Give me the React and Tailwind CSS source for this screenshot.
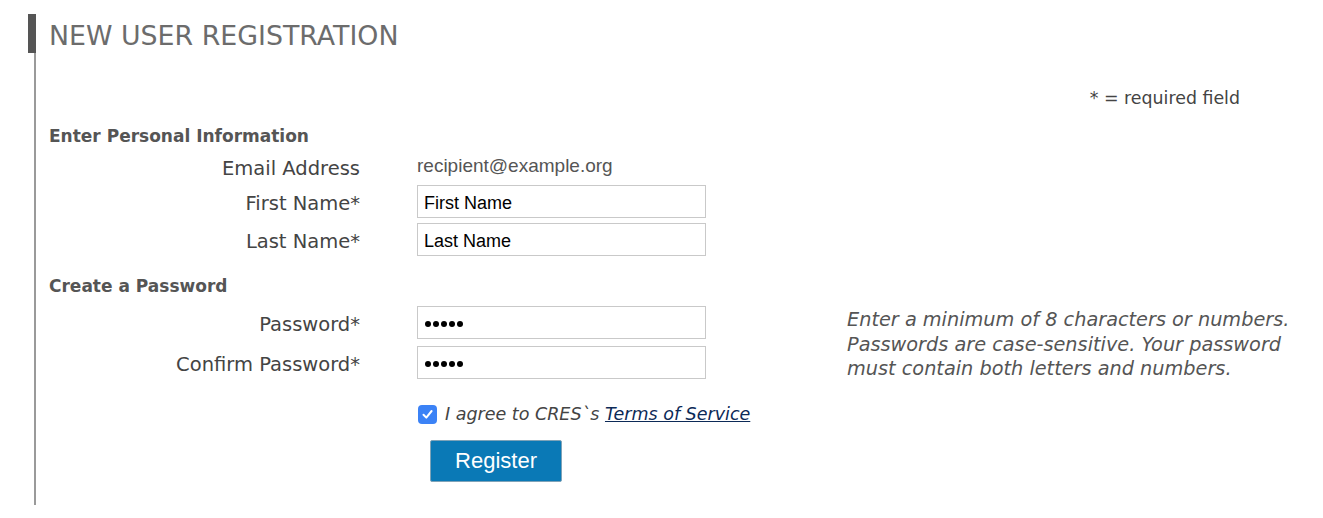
import React from "react";

const verdana = { fontFamily: '"DejaVu Sans", Verdana, sans-serif' };
const arial = { fontFamily: '"Liberation Sans", Arial, sans-serif' };

function Row({ label, children, labelPad = "pt-[4px]", h = "h-[33px]" }) {
  return (
    <div className={`flex ${h} items-center`}>
      <div className={`w-[311px] text-right text-[19.5px] text-[#444] ${labelPad}`} style={verdana}>
        {label}
      </div>
      <div className="ml-[57px] flex h-full items-center">{children}</div>
    </div>
  );
}

function Field({ value }) {
  return (
    <div
      className="flex h-[33px] w-[289px] items-center border border-[#c9c9c9] bg-white pl-[6px] pt-[3px] text-[18px] text-black"
      style={arial}
    >
      {value}
    </div>
  );
}

function Dots() {
  return (
    <div className="flex h-[33px] w-[289px] items-center gap-[2px] border border-[#c9c9c9] bg-white pl-[7px] pt-[2px]">
      {[0, 1, 2, 3, 4].map((i) => (
        <span key={i} className="h-[6px] w-[6px] rounded-full bg-black" />
      ))}
    </div>
  );
}

export default function App() {
  return (
    <div className="h-[518px] w-[1323px] bg-white">
      <div className="ml-[28px] flex pt-[14px]">
        <div className="flex w-[8px] flex-col items-end">
          <div className="h-[39px] w-[8px] bg-[#555]" />
          <div className="h-[452px] w-[2px] bg-[#9a9a9a]" />
        </div>
        <div className="flex-1 pl-[13px]">
          <h1
            className="flex h-[39px] items-center pt-[6px] text-[26.8px] font-normal text-[#6c6c6c]"
            style={verdana}
          >
            NEW USER REGISTRATION
          </h1>
          <div
            className="mt-[34px] flex h-[22px] items-center justify-end pr-[83px] text-[17.4px] text-[#444]"
            style={verdana}
          >
            * = required field
          </div>
          <div
            className="mt-[17px] flex h-[22px] items-center text-[17px] font-bold text-[#555]"
            style={verdana}
          >
            Enter Personal Information
          </div>
          <div className="mt-[7px]">
            <Row label="Email Address" labelPad="pt-0" h="h-[28px]">
              <span className="pb-[5px] text-[19px] text-[#555]" style={arial}>
                recipient@example.org
              </span>
            </Row>
          </div>
          <div className="mt-[2px] flex flex-col gap-[5px]">
            <Row label="First Name*">
              <Field value="First Name" />
            </Row>
            <Row label="Last Name*">
              <Field value="Last Name" />
            </Row>
          </div>
          <div
            className="mt-[20px] flex h-[22px] items-center text-[17px] font-bold text-[#555]"
            style={verdana}
          >
            Create a Password
          </div>
          <div className="mt-[8px] flex">
            <div className="flex flex-col gap-[7px]">
              <Row label="Password*">
                <Dots />
              </Row>
              <Row label="Confirm Password*">
                <Dots />
              </Row>
            </div>
            <p
              className="ml-[141px] mt-[2px] w-[460px] text-[19.3px] italic leading-[24.5px] text-[#555]"
              style={verdana}
            >
              Enter a minimum of 8 characters or numbers. Passwords are case-sensitive. Your password
              must contain both letters and numbers.
            </p>
          </div>
          <div className="ml-[369px] mt-[23px] flex h-[19px] items-center">
            <div className="flex h-[19px] w-[19px] items-center justify-center rounded-[4px] bg-[#3b82f6]">
              <svg width="13" height="13" viewBox="0 0 13 13">
                <path d="M2.5 6.8 L5.3 9.6 L10.6 3" fill="none" stroke="white" strokeWidth="2" strokeLinecap="round" strokeLinejoin="round" />
              </svg>
            </div>
            <span className="ml-[8px] text-[17.5px] italic text-[#444]" style={verdana}>
              I agree to CRES`s{" "}
              <a href="#" className="text-[#0c2a57] underline">
                Terms of Service
              </a>
            </span>
          </div>
          <button
            className="ml-[381px] mt-[16px] flex h-[42px] w-[132px] items-center justify-center rounded-[2px] border border-[#7fa3b8] bg-[#0a79b6] text-[22px] text-white"
            style={arial}
          >
            Register
          </button>
        </div>
      </div>
    </div>
  );
}
